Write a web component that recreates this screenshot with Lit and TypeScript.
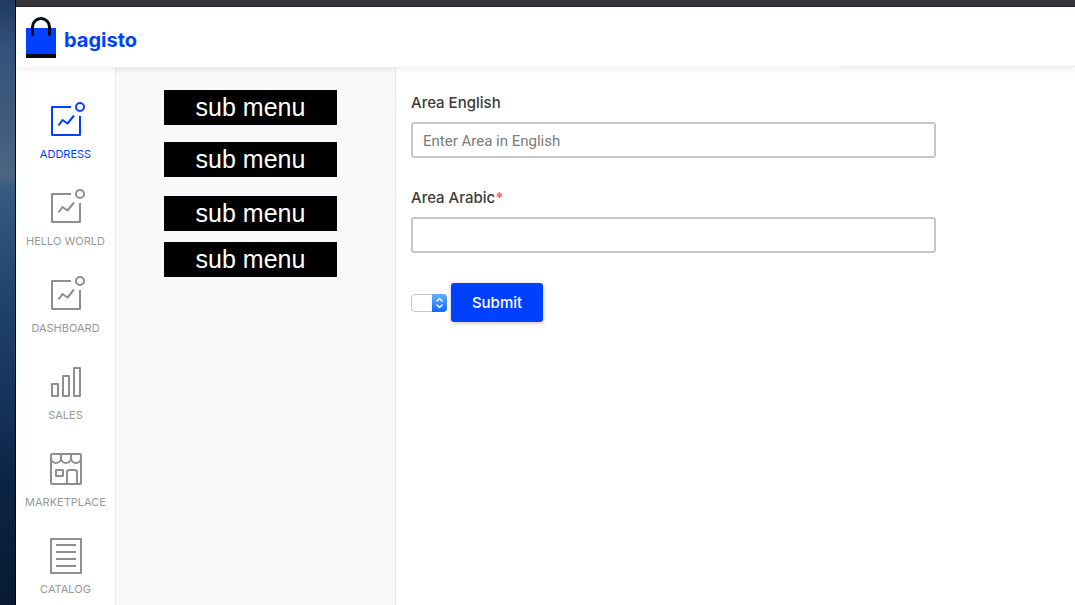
import { LitElement, html, css, svg } from "lit";
import { customElement, property } from "lit/decorators.js";

const icons: Record<string, unknown> = {
  dashboard: svg`
    <path d="M28 9H9V37H37V18" />
    <circle cx="37" cy="9" r="4" />
    <path d="M15.500 27.500L19.500 22L24.500 25.500L31 17.500" />`,
  sales: svg`
    <rect x="9" y="25" width="6" height="12" />
    <rect x="20" y="17" width="6" height="20" />
    <rect x="31" y="9" width="6" height="28" />`,
  market: svg`
    <rect x="8" y="8" width="30" height="30" rx="1" />
    <path d="M8 12A5 5 0 0 0 18 12A5 5 0 0 0 28 12A5 5 0 0 0 38 12M18 8V13M28 8V13" />
    <rect x="13" y="24" width="7" height="6" />
    <path d="M24 38V26Q24 24 26 24H32Q34 24 34 26V38" />`,
  catalog: svg`
    <rect x="8" y="6" width="30" height="34" />
    <path d="M13 12H33M13 19H33M13 26H33M13 33H33" />`,
};

const navItems = [
  { label: "ADDRESS", icon: "dashboard", active: true },
  { label: "HELLO WORLD", icon: "dashboard" },
  { label: "DASHBOARD", icon: "dashboard" },
  { label: "SALES", icon: "sales" },
  { label: "MARKETPLACE", icon: "market" },
  { label: "CATALOG", icon: "catalog" },
];

@customElement("nav-item")
export class NavItem extends LitElement {
  @property() label = "";
  @property() icon = "dashboard";
  @property({ type: Boolean, reflect: true }) active = false;

  static styles = css`
    :host {
      display: block;
    }
    .link {
      display: flex;
      flex-direction: column;
      align-items: center;
      height: 87px;
      color: #979797;
      text-decoration: none;
      font-size: 11px;
      line-height: 16px;
      white-space: nowrap;
    }
    :host([active]) .link {
      color: #0041ff;
    }
    .icon {
      width: 45px;
      height: 44px;
      margin-bottom: 4px;
      fill: none;
      stroke: #8e8e8e;
      stroke-width: 2;
      stroke-linejoin: round;
    }
    :host([active]) .icon {
      stroke: #0041ff;
    }
  `;

  render() {
    return html`<a class="link" href="#">
      <svg class="icon" viewBox="0 0 45 44" aria-hidden="true">${icons[this.icon]}</svg>
      <span>${this.label}</span>
    </a>`;
  }
}

@customElement("app-root")
export class AppRoot extends LitElement {
  static styles = css`
    :host {
      display: flex;
      height: 100vh;
      overflow: hidden;
      font-family: Inter, "Open Sans", sans-serif;
      color: #3a3a3a;
      background: #fff;
    }
    * {
      box-sizing: border-box;
    }
    .desktop {
      flex: none;
      width: 16px;
      border-right: 1px solid #000;
      background: linear-gradient(#1f3a5c, #33527a 8%, #3f5c7c 20%, #4c6682 29%, #365a80 31%, #1f426d 50%, #16345b 65%, #0c2444 80%, #081a33);
    }
    .window {
      flex: 1;
      min-width: 0;
      display: flex;
      flex-direction: column;
    }
    .chrome {
      flex: none;
      height: 7px;
      background: #37353a;
      border-bottom: 1px solid #262427;
    }
    .header {
      flex: none;
      display: flex;
      align-items: center;
      justify-content: space-between;
      height: 60px;
      padding-left: 10px;
      box-shadow: 0 2px 8px rgba(0, 0, 0, 0.08);
      z-index: 1;
    }
    .brand {
      display: flex;
      align-items: center;
      gap: 8px;
      color: #0041ff;
      font-size: 20px;
      font-weight: 700;
      line-height: 24px;
      text-decoration: none;
    }
    .brand-name {
      padding-top: 6px;
    }
    .bag {
      width: 30px;
      height: 42px;
    }
    .rule {
      align-self: flex-end;
      width: 235px;
      height: 1px;
      background: #ececec;
    }
    .body {
      flex: 1;
      min-height: 0;
      display: flex;
    }
    .nav {
      flex: none;
      width: 100px;
      padding-top: 31px;
      border-right: 1px solid #e9e9e9;
    }
    .submenu {
      flex: none;
      display: flex;
      flex-direction: column;
      width: 280px;
      padding: 23px 58px 0 48px;
      background: #f8f9fb;
      border-right: 1px solid #e7e7e7;
    }
    .sub {
      height: 35px;
      background: #000;
      color: #fff;
      font: 25px/35px "Liberation Sans", Arial, sans-serif;
      text-align: center;
      text-decoration: none;
      margin-bottom: 17px;
    }
    .sub.loose {
      margin-bottom: 19px;
    }
    .sub.tight {
      margin-bottom: 11px;
    }
    .form {
      flex: 1;
      min-width: 0;
      padding: 26px 15px;
    }
    .field {
      display: flex;
      flex-direction: column;
      gap: 9px;
      max-width: 525px;
      margin-bottom: 30px;
    }
    .label {
      font-size: 15px;
      font-weight: 500;
      line-height: 20px;
    }
    .required {
      color: #fc6868;
      font-weight: 700;
    }
    .input {
      width: 100%;
      height: 36px;
      padding: 2px 10px 0;
      border: 2px solid #c7c7c7;
      border-radius: 3px;
      background: #fff;
      font: 15px Roboto, sans-serif;
      color: #3a3a3a;
    }
    .input::placeholder {
      color: #7b7b7b;
    }
    .actions {
      display: flex;
      align-items: center;
      gap: 4px;
    }
    .picker {
      display: grid;
      width: 36px;
      height: 18px;
    }
    .select {
      grid-area: 1 / 1;
      appearance: none;
      width: 100%;
      height: 100%;
      padding: 0;
      border: 1px solid #c4c4c4;
      border-radius: 4px;
      background: #fff;
    }
    .arrows {
      grid-area: 1 / 1;
      justify-self: end;
      width: 15px;
      height: 18px;
      border-radius: 0 4px 4px 0;
      background: linear-gradient(#6cb0fa, #0769f8);
      z-index: 1;
      pointer-events: none;
      fill: none;
      stroke: #fff;
      stroke-width: 1.4;
    }
    .submit {
      min-width: 92px;
      height: 39px;
      padding: 0 18px;
      border: 0;
      border-radius: 3px;
      background: #0041ff;
      box-shadow: 0 1px 4px rgba(0, 0, 0, 0.25);
      color: #fff;
      font: 500 15px/20px Inter, "Open Sans", sans-serif;
    }
  `;

  render() {
    return html`
      <div class="desktop"></div>
      <div class="window">
        <div class="chrome"></div>
        <header class="header">
          <a class="brand" href="#">
            <svg class="bag" viewBox="0 0 30 42" aria-hidden="true">
              <rect y="12" width="30" height="26" fill="#0041ff" />
              <rect y="38" width="30" height="4" fill="#060614" />
              <path d="M6.500 18.500V11A8.500 8.500 0 0 1 23.500 11V18.500" fill="none" stroke="#060614" stroke-width="3" stroke-linecap="round" />
            </svg>
            <span class="brand-name">bagisto</span>
          </a>
          <div class="rule"></div>
        </header>
        <div class="body">
          <nav class="nav">
            ${navItems.map(
              (i) => html`<nav-item .label=${i.label} .icon=${i.icon} ?active=${i.active}></nav-item>`
            )}
          </nav>
          <nav class="submenu">
            <a class="sub" href="#">sub menu</a>
            <a class="sub loose" href="#">sub menu</a>
            <a class="sub tight" href="#">sub menu</a>
            <a class="sub" href="#">sub menu</a>
          </nav>
          <form class="form">
            <div class="field">
              <label class="label" for="area-en">Area English</label>
              <input class="input" id="area-en" type="text" placeholder="Enter Area in English" />
            </div>
            <div class="field">
              <label class="label" for="area-ar">Area Arabic<span class="required">*</span></label>
              <input class="input" id="area-ar" type="text" />
            </div>
            <div class="actions">
              <div class="picker">
                <select class="select" aria-label="Area"></select>
                <svg class="arrows" viewBox="0 0 15 18" aria-hidden="true">
                  <path d="M4.500 7.500L7.500 4.500L10.500 7.500M4.500 10.500L7.500 13.500L10.500 10.500" />
                </svg>
              </div>
              <button class="submit" type="button">Submit</button>
            </div>
          </form>
        </div>
      </div>
    `;
  }
}
